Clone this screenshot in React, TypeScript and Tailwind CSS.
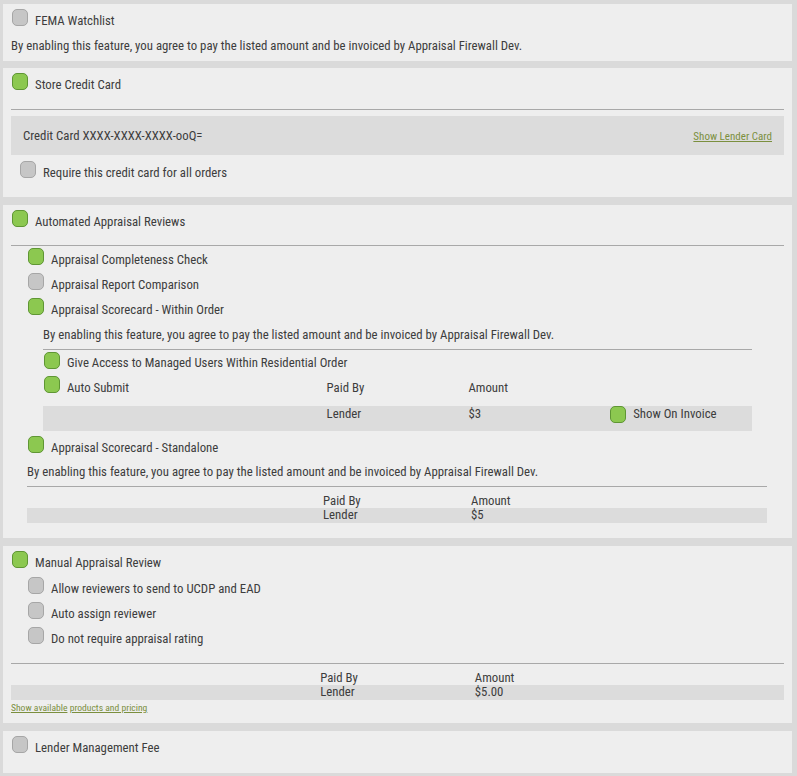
import React from "react";

const font = { fontFamily: '"Roboto Condensed", "Liberation Sans Narrow", "DejaVu Sans Condensed", Roboto, sans-serif' };

const Box = ({ on }: { on?: boolean }) => (
	<span
		className={`inline-block w-[16px] h-[17px] rounded-[5px] border shrink-0 ${on ? "bg-[#8cc850] border-[#5f9634]" : "bg-[#c6c6c6] border-[#a6a6a6]"}`}
	/>
);

const Check = ({ on, label, className = "" }: { on?: boolean; label: string; className?: string }) => (
	<div className={`flex items-center h-[25px] ${className}`}>
		<span className="ml-[1px]"><Box on={on} /></span>
		<span className="ml-[7px]">{label}</span>
	</div>
);

const Panel = ({ children, className = "" }: { children: React.ReactNode; className?: string }) => (
	<div className={`bg-[#eeeeee] px-2 pt-1 ${className}`}>{children}</div>
);

const Hr = ({ className = "" }: { className?: string }) => <div className={`h-px bg-[#a8a8a8] ${className}`} />;

const AGREE = "By enabling this feature, you agree to pay the listed amount and be invoiced by Appraisal Firewall Dev.";

const PriceTable = ({ amount }: { amount: string }) => (
	<div className="leading-[14px]">
		<div className="grid grid-cols-5 h-[14px]">
			<span className="col-start-3">Paid By</span>
			<span>Amount</span>
		</div>
		<div className="grid grid-cols-5 h-[15px] bg-[#dcdcdc]">
			<span className="col-start-3">Lender</span>
			<span>{amount}</span>
		</div>
	</div>
);

export default function App()
{
	return (
		<div className="min-h-[776px] bg-[#dadada] pl-[3px] pr-[5px] py-1 text-[12.8px] text-[#3d3d3d]" style={font}>
			<Panel className="pb-1 mb-[7px]">
				<Check label="FEMA Watchlist" />
				<div className="h-[24px] flex items-center pt-[2px]">{AGREE}</div>
			</Panel>

			<Panel className="pb-[12px] mb-[8px]">
				<Check on label="Store Credit Card" />
				<Hr className="mt-[12px]" />
				<div className="mt-[6px] h-[39px] bg-[#dcdcdc] flex items-center justify-between pl-[12px] pr-[12px]">
					<span>Credit Card XXXX-XXXX-XXXX-ooQ=</span>
					<a className="pt-[3px] text-[11px] text-[#7b8f3e] underline">Show Lender Card</a>
				</div>
				<Check label="Require this credit card for all orders" className="mt-[5px] pl-[8px]" />
			</Panel>

			<Panel className="pb-[15px] mb-[8px]">
				<Check on label="Automated Appraisal Reviews" />
				<Hr className="mt-[11px]" />
				<div className="pl-[16px] mt-[1px]">
					<Check on label="Appraisal Completeness Check" />
					<Check label="Appraisal Report Comparison" />
					<Check on label="Appraisal Scorecard - Within Order" />
					<div className="pl-[16px] pr-[32px]">
						<div className="h-[25px] flex items-center">{AGREE}</div>
						<Hr className="mt-[2px]" />
						<Check on label="Give Access to Managed Users Within Residential Order" className="pt-[1px]" />
						<div className="grid grid-cols-5 h-[25px] items-center">
							<Check on label="Auto Submit" className="col-span-2" />
							<span>Paid By</span>
							<span>Amount</span>
						</div>
						<div className="grid grid-cols-5 h-[25px] mt-[6px] bg-[#dcdcdc] items-start leading-[15px]">
							<span className="col-start-3">Lender</span>
							<span>$3</span>
							<div className="flex items-start">
								<Box on />
								<span className="ml-[7px]">Show On Invoice</span>
							</div>
						</div>
					</div>
					<Check on label="Appraisal Scorecard - Standalone" className="mt-[4px]" />
				</div>
				<div className="h-[24px] flex items-center pl-[16px]">{AGREE}</div>
				<div className="pl-[16px] pr-[17px]">
					<Hr className="mt-[2px]" />
					<div className="mt-[7px]">
						<PriceTable amount="$5" />
					</div>
				</div>
			</Panel>

			<Panel className="pb-[8px] mb-[8px]">
				<Check on label="Manual Appraisal Review" />
				<div className="pl-[16px] mt-[1px]">
					<Check label="Allow reviewers to send to UCDP and EAD" />
					<Check label="Auto assign reviewer" />
					<Check label="Do not require appraisal rating" />
				</div>
				<Hr className="mt-[12px]" />
				<div className="mt-[7px]">
					<PriceTable amount="$5.00" />
				</div>
				<div className="h-[14px] mt-[1px] flex items-center text-[9.6px] text-[#7b8f3e]">
					<a className="underline">Show available</a>&nbsp;<a className="underline">products and pricing</a>
				</div>
			</Panel>

			<Panel className="pb-[13px]">
				<Check label="Lender Management Fee" />
			</Panel>
		</div>
	);
}
